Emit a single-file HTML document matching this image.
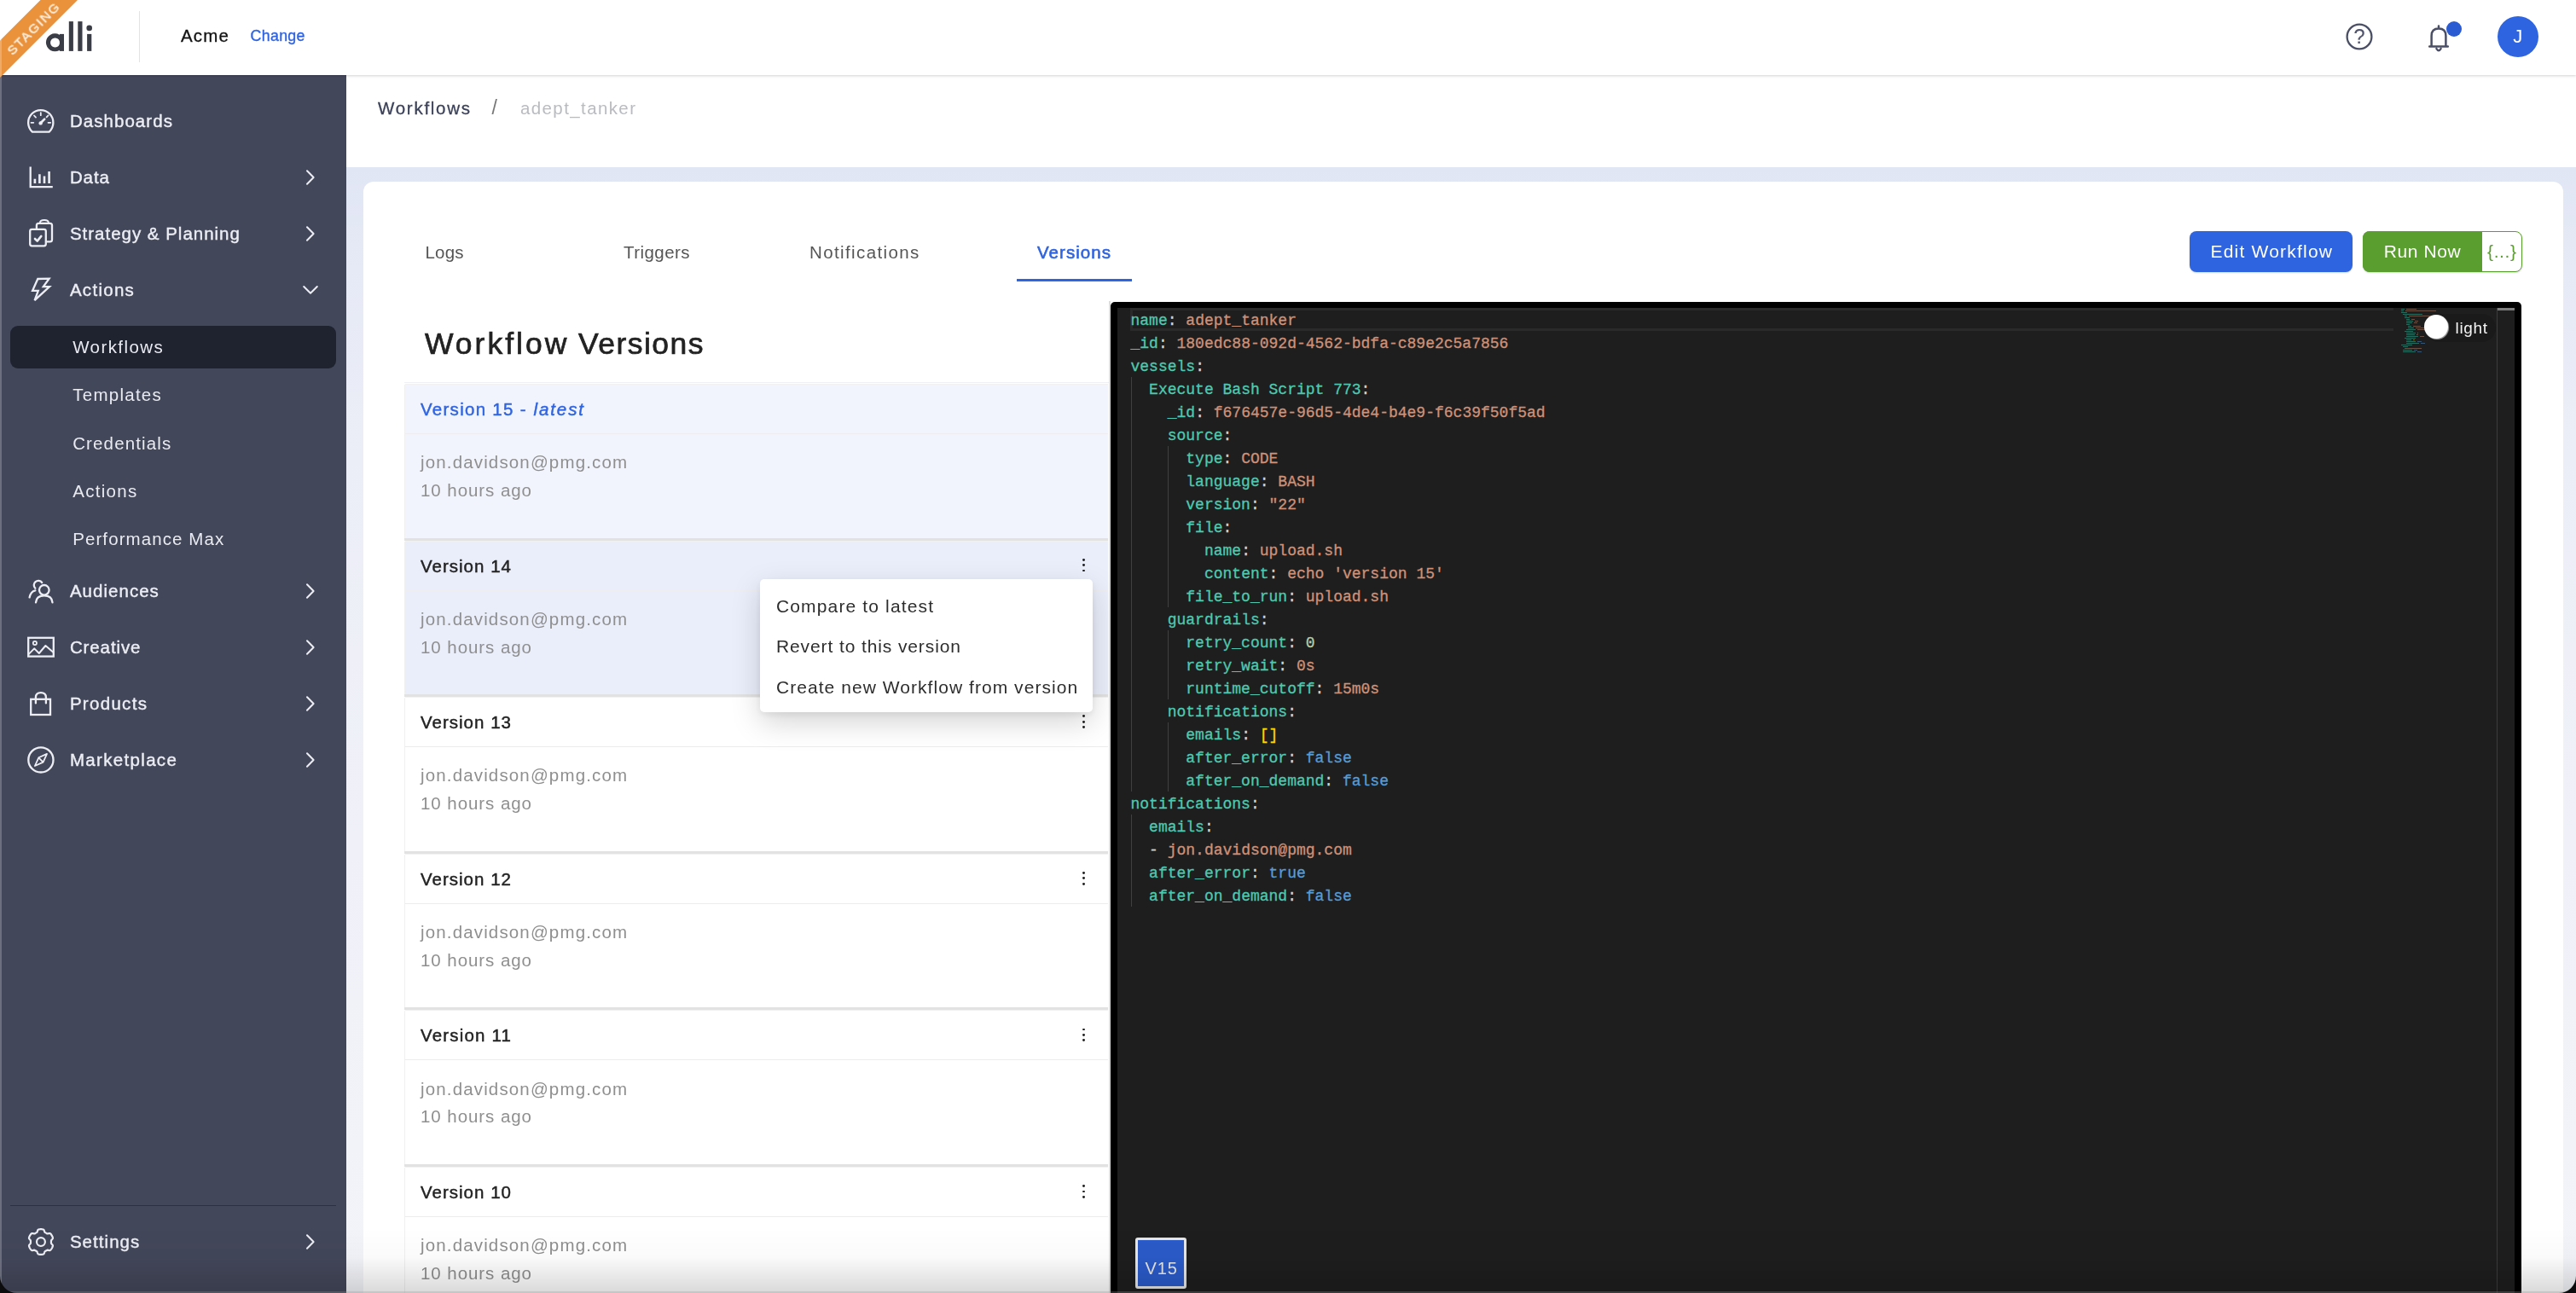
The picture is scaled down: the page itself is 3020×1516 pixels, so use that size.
<!DOCTYPE html>
<html lang="en"><head><meta charset="utf-8"><title>alli - Workflow Versions</title>
<style>
*{box-sizing:border-box;margin:0;padding:0}
html,body{width:3020px;height:1516px;overflow:hidden;background:#fff;font-family:"Liberation Sans",sans-serif}
body{position:relative}
.abs{position:absolute}
.t{position:absolute;white-space:pre;line-height:1;font-family:"Liberation Sans",sans-serif}
body>*{will-change:opacity}
.m{font-family:"Liberation Mono",monospace}
svg{position:absolute;overflow:visible}
.ic{fill:none;stroke:#eceef4;stroke-width:2.3;stroke-linecap:round;stroke-linejoin:round}
#bg{left:406px;top:196px;width:2614px;height:1320px;background:linear-gradient(180deg,#e1e6f5 0px,#e6eaf6 120px,#eceef7 340px,#f0f1f8 800px,#f3f4f8 1320px)}
#crumbs{left:406px;top:88px;width:2614px;height:108px;background:#fff}
#card{left:426px;top:213px;width:2579px;height:1320px;background:#fff;border-radius:12px}
#sidebar{left:0;top:88px;width:406px;height:1428px;background:#43475a}
#header{left:0;top:0;width:3020px;height:88px;background:#fff;box-shadow:0 1px 3px rgba(0,0,0,.18)}
.vb{position:absolute;left:474px;width:824.8px;height:183.7px;background:#fff;border-left:1px solid #f0f0f0;border-top:1px solid #f1f1f1;border-radius:2px 0 0 0}
.vb .hd{position:absolute;left:0;top:0;right:0;height:58px;border-bottom:1px solid #ebebeb}
.vb .bt{position:absolute;left:-1px;right:0;bottom:0;height:3px;background:#e2e2e2}
.dots{position:absolute;width:2.9px;height:2.9px;border-radius:50%;background:#222}
#editor{left:1302px;top:354px;width:1654px;height:1200px;background:#000;border-radius:5px 5px 0 0}
#ed-in{left:8px;top:7px;width:1638px;height:1200px;background:#1e1e1e}
.cl{position:absolute;left:15.5px;height:27px;line-height:27px;margin-top:1.5px;-webkit-text-stroke:0.32px;font-family:"Liberation Mono",monospace;font-size:18px;white-space:pre;color:#d4d4d4}
.k{color:#4ec9b0}.s{color:#ce9178}.n{color:#b5cea8}.b{color:#569cd6}.y{color:#ffd700}
.g{position:absolute;width:1px;background:#404040}
</style></head><body>
<div class="abs" id="bg"></div><div class="abs" id="crumbs"></div><div class="abs" id="card"></div>
<span class="t" style="left:443.0px;top:116.6px;font-size:20.5px;color:#3b4159;font-weight:400;font-style:normal;letter-spacing:1.73px;-webkit-text-stroke:0.3px #3b4159;">Workflows</span>
<span class="t" style="left:576.5px;top:115.0px;font-size:23px;color:#777;font-weight:400;font-style:normal;letter-spacing:0.00px;">/</span>
<span class="t" style="left:610.0px;top:116.6px;font-size:20.5px;color:#b9bbc0;font-weight:400;font-style:normal;letter-spacing:1.39px;">adept_tanker</span>
<span class="t" style="left:498.5px;top:285.6px;font-size:20.5px;color:#555;font-weight:400;font-style:normal;letter-spacing:0.18px;">Logs</span>
<span class="t" style="left:731.0px;top:285.6px;font-size:20.5px;color:#555;font-weight:400;font-style:normal;letter-spacing:0.44px;">Triggers</span>
<span class="t" style="left:949.0px;top:285.6px;font-size:20.5px;color:#555;font-weight:400;font-style:normal;letter-spacing:1.39px;">Notifications</span>
<span class="t" style="left:1216.0px;top:285.6px;font-size:20.5px;color:#2f64e0;font-weight:400;font-style:normal;letter-spacing:1.05px;-webkit-text-stroke:0.6px #2f64e0;">Versions</span>
<div class="abs" style="left:1192px;top:327px;width:135px;height:3px;background:#2f64e0"></div>
<div class="abs" style="left:2567px;top:271px;width:191px;height:48px;border-radius:8px;background:#2f64e0;box-shadow:0 1px 2px rgba(0,0,0,.15)"></div>
<span class="t" style="left:2591.5px;top:284.2px;font-size:21px;color:#fff;font-weight:400;font-style:normal;letter-spacing:1.21px;">Edit Workflow</span>
<div class="abs" style="left:2770px;top:271px;width:187px;height:48px;border-radius:8px;background:#fff;border:1.5px solid #5a9e2f;box-shadow:0 1px 2px rgba(0,0,0,.15)"></div>
<div class="abs" style="left:2770px;top:271px;width:140px;height:48px;border-radius:8px 0 0 8px;background:#5a9e2f"></div>
<span class="t" style="left:2794.7px;top:284.2px;font-size:21px;color:#fff;font-weight:400;font-style:normal;letter-spacing:0.60px;">Run Now</span>
<span class="t" style="left:2916.0px;top:284.2px;font-size:21px;color:#5a9e2f;font-weight:400;font-style:normal;letter-spacing:0.62px;">{...}</span>
<span class="t" style="left:498.0px;top:385.6px;font-size:35.5px;color:#222;font-weight:400;font-style:normal;letter-spacing:3.00px;-webkit-text-stroke:0.7px #222;">Workflow</span>
<span class="t" style="left:678.0px;top:385.6px;font-size:35.5px;color:#222;font-weight:400;font-style:normal;letter-spacing:1.49px;-webkit-text-stroke:0.7px #222;">Versions</span>
<div class="abs" style="left:474px;top:448px;width:826px;height:1px;background:#eef0f5"></div>
<div class="vb" style="top:450px;background:#f1f4fd"><div class="hd" style="border-bottom-color:#eeeef0"></div><div class="bt"></div></div>
<span class="t" style="left:493.0px;top:470.0px;font-size:20.5px;color:#2f64e0;font-weight:400;font-style:normal;letter-spacing:1.28px;-webkit-text-stroke:0.45px #2f64e0;">Version 15 - </span>
<span class="t" style="left:625.5px;top:470.0px;font-size:20.5px;color:#2f64e0;font-weight:400;font-style:italic;letter-spacing:1.90px;-webkit-text-stroke:0.45px #2f64e0;">latest</span>
<span class="t" style="left:493.0px;top:532.1px;font-size:20.5px;color:#8f8f8f;font-weight:400;font-style:normal;letter-spacing:1.15px;">jon.davidson@pmg.com</span>
<span class="t" style="left:493.0px;top:565.0px;font-size:20.5px;color:#8f8f8f;font-weight:400;font-style:normal;letter-spacing:0.94px;">10 hours ago</span>
<div class="vb" style="top:633.6px;background:#eaeefb"><div class="hd" style="border-bottom-color:#eeeef0"></div><div class="bt"></div></div>
<span class="t" style="left:493.0px;top:653.6px;font-size:20.5px;color:#222;font-weight:400;font-style:normal;letter-spacing:1.01px;-webkit-text-stroke:0.45px #222;">Version 14</span>
<div class="dots" style="left:1269.05px;top:654.7px"></div>
<div class="dots" style="left:1269.05px;top:661.1px"></div>
<div class="dots" style="left:1269.05px;top:667.5px"></div>
<span class="t" style="left:493.0px;top:715.7px;font-size:20.5px;color:#8f8f8f;font-weight:400;font-style:normal;letter-spacing:1.15px;">jon.davidson@pmg.com</span>
<span class="t" style="left:493.0px;top:748.6px;font-size:20.5px;color:#8f8f8f;font-weight:400;font-style:normal;letter-spacing:0.94px;">10 hours ago</span>
<div class="vb" style="top:817.2px;background:#fff"><div class="hd" style="border-bottom-color:#ececec"></div><div class="bt"></div></div>
<span class="t" style="left:493.0px;top:837.2px;font-size:20.5px;color:#222;font-weight:400;font-style:normal;letter-spacing:1.01px;-webkit-text-stroke:0.45px #222;">Version 13</span>
<div class="dots" style="left:1269.05px;top:838.3px"></div>
<div class="dots" style="left:1269.05px;top:844.7px"></div>
<div class="dots" style="left:1269.05px;top:851.1px"></div>
<span class="t" style="left:493.0px;top:899.3px;font-size:20.5px;color:#8f8f8f;font-weight:400;font-style:normal;letter-spacing:1.15px;">jon.davidson@pmg.com</span>
<span class="t" style="left:493.0px;top:932.2px;font-size:20.5px;color:#8f8f8f;font-weight:400;font-style:normal;letter-spacing:0.94px;">10 hours ago</span>
<div class="vb" style="top:1000.8px;background:#fff"><div class="hd" style="border-bottom-color:#ececec"></div><div class="bt"></div></div>
<span class="t" style="left:493.0px;top:1020.8px;font-size:20.5px;color:#222;font-weight:400;font-style:normal;letter-spacing:1.01px;-webkit-text-stroke:0.45px #222;">Version 12</span>
<div class="dots" style="left:1269.05px;top:1021.9px"></div>
<div class="dots" style="left:1269.05px;top:1028.3px"></div>
<div class="dots" style="left:1269.05px;top:1034.7px"></div>
<span class="t" style="left:493.0px;top:1082.9px;font-size:20.5px;color:#8f8f8f;font-weight:400;font-style:normal;letter-spacing:1.15px;">jon.davidson@pmg.com</span>
<span class="t" style="left:493.0px;top:1115.8px;font-size:20.5px;color:#8f8f8f;font-weight:400;font-style:normal;letter-spacing:0.94px;">10 hours ago</span>
<div class="vb" style="top:1184.4px;background:#fff"><div class="hd" style="border-bottom-color:#ececec"></div><div class="bt"></div></div>
<span class="t" style="left:493.0px;top:1204.4px;font-size:20.5px;color:#222;font-weight:400;font-style:normal;letter-spacing:1.18px;-webkit-text-stroke:0.45px #222;">Version 11</span>
<div class="dots" style="left:1269.05px;top:1205.5px"></div>
<div class="dots" style="left:1269.05px;top:1211.9px"></div>
<div class="dots" style="left:1269.05px;top:1218.3px"></div>
<span class="t" style="left:493.0px;top:1266.5px;font-size:20.5px;color:#8f8f8f;font-weight:400;font-style:normal;letter-spacing:1.15px;">jon.davidson@pmg.com</span>
<span class="t" style="left:493.0px;top:1299.4px;font-size:20.5px;color:#8f8f8f;font-weight:400;font-style:normal;letter-spacing:0.94px;">10 hours ago</span>
<div class="vb" style="top:1368px;background:#fff"><div class="hd" style="border-bottom-color:#ececec"></div><div class="bt"></div></div>
<span class="t" style="left:493.0px;top:1388.0px;font-size:20.5px;color:#222;font-weight:400;font-style:normal;letter-spacing:1.01px;-webkit-text-stroke:0.45px #222;">Version 10</span>
<div class="dots" style="left:1269.05px;top:1389.1px"></div>
<div class="dots" style="left:1269.05px;top:1395.5px"></div>
<div class="dots" style="left:1269.05px;top:1401.9px"></div>
<span class="t" style="left:493.0px;top:1450.1px;font-size:20.5px;color:#8f8f8f;font-weight:400;font-style:normal;letter-spacing:1.15px;">jon.davidson@pmg.com</span>
<span class="t" style="left:493.0px;top:1483.0px;font-size:20.5px;color:#8f8f8f;font-weight:400;font-style:normal;letter-spacing:0.94px;">10 hours ago</span>
<div class="abs" style="left:1300px;top:353px;width:2px;height:1163px;background:#dcdcdc"></div>
<div class="abs" style="left:891px;top:679px;width:390px;height:156px;background:#fff;border-radius:5px;box-shadow:0 12px 34px rgba(0,0,0,.17),0 3px 9px rgba(0,0,0,.07)"></div>
<span class="t" style="left:910.0px;top:699.7px;font-size:21px;color:#2d2d2d;font-weight:400;font-style:normal;letter-spacing:1.14px;">Compare to latest</span>
<span class="t" style="left:910.0px;top:747.4px;font-size:21px;color:#2d2d2d;font-weight:400;font-style:normal;letter-spacing:0.89px;">Revert to this version</span>
<span class="t" style="left:910.0px;top:795.2px;font-size:21px;color:#2d2d2d;font-weight:400;font-style:normal;letter-spacing:1.05px;">Create new Workflow from version</span>
<div class="abs" id="editor"><div class="abs" id="ed-in"><div class="abs" style="left:15px;top:0;width:1481px;height:27.5px;border:3px solid #2a2a2a;border-right:none;top:-0.5px"></div><div class="g" style="left:15.5px;top:81px;height:486px"></div><div class="g" style="left:58.7px;top:162px;height:189px"></div><div class="g" style="left:58.7px;top:378px;height:81px"></div><div class="g" style="left:58.7px;top:486px;height:81px"></div><div class="g" style="left:15.5px;top:594px;height:108px"></div><div class="cl" style="top:0px"><span class="k">name</span>: <span class="s">adept_tanker</span></div><div class="cl" style="top:27px"><span class="k">_id</span>: <span class="s">180edc88-092d-4562-bdfa-c89e2c5a7856</span></div><div class="cl" style="top:54px"><span class="k">vessels</span>:</div><div class="cl" style="top:81px">  <span class="k">Execute Bash Script 773</span>:</div><div class="cl" style="top:108px">    <span class="k">_id</span>: <span class="s">f676457e-96d5-4de4-b4e9-f6c39f50f5ad</span></div><div class="cl" style="top:135px">    <span class="k">source</span>:</div><div class="cl" style="top:162px">      <span class="k">type</span>: <span class="s">CODE</span></div><div class="cl" style="top:189px">      <span class="k">language</span>: <span class="s">BASH</span></div><div class="cl" style="top:216px">      <span class="k">version</span>: <span class="s">&quot;22&quot;</span></div><div class="cl" style="top:243px">      <span class="k">file</span>:</div><div class="cl" style="top:270px">        <span class="k">name</span>: <span class="s">upload.sh</span></div><div class="cl" style="top:297px">        <span class="k">content</span>: <span class="s">echo &#x27;version 15&#x27;</span></div><div class="cl" style="top:324px">      <span class="k">file_to_run</span>: <span class="s">upload.sh</span></div><div class="cl" style="top:351px">    <span class="k">guardrails</span>:</div><div class="cl" style="top:378px">      <span class="k">retry_count</span>: <span class="n">0</span></div><div class="cl" style="top:405px">      <span class="k">retry_wait</span>: <span class="s">0s</span></div><div class="cl" style="top:432px">      <span class="k">runtime_cutoff</span>: <span class="s">15m0s</span></div><div class="cl" style="top:459px">    <span class="k">notifications</span>:</div><div class="cl" style="top:486px">      <span class="k">emails</span>: <span class="y">[]</span></div><div class="cl" style="top:513px">      <span class="k">after_error</span>: <span class="b">false</span></div><div class="cl" style="top:540px">      <span class="k">after_on_demand</span>: <span class="b">false</span></div><div class="cl" style="top:567px"><span class="k">notifications</span>:</div><div class="cl" style="top:594px">  <span class="k">emails</span>:</div><div class="cl" style="top:621px">  - <span class="s">jon.davidson@pmg.com</span></div><div class="cl" style="top:648px">  <span class="k">after_error</span>: <span class="b">true</span></div><div class="cl" style="top:675px">  <span class="k">after_on_demand</span>: <span class="b">false</span></div><div class="abs" style="left:1505.0px;top:1.0px;width:4.0px;height:1.4px;opacity:.62;background:#2f9c88"></div><div class="abs" style="left:1511.0px;top:1.0px;width:12.0px;height:1.4px;opacity:.62;background:#9c6f5a"></div><div class="abs" style="left:1505.0px;top:3.0px;width:3.0px;height:1.4px;opacity:.62;background:#2f9c88"></div><div class="abs" style="left:1510.0px;top:3.0px;width:36.0px;height:1.4px;opacity:.62;background:#9c6f5a"></div><div class="abs" style="left:1505.0px;top:5.0px;width:7.0px;height:1.4px;opacity:.62;background:#2f9c88"></div><div class="abs" style="left:1507.0px;top:7.0px;width:23.0px;height:1.4px;opacity:.62;background:#2f9c88"></div><div class="abs" style="left:1509.0px;top:9.0px;width:3.0px;height:1.4px;opacity:.62;background:#2f9c88"></div><div class="abs" style="left:1514.0px;top:9.0px;width:36.0px;height:1.4px;opacity:.62;background:#9c6f5a"></div><div class="abs" style="left:1509.0px;top:11.0px;width:6.0px;height:1.4px;opacity:.62;background:#2f9c88"></div><div class="abs" style="left:1511.0px;top:13.0px;width:4.0px;height:1.4px;opacity:.62;background:#2f9c88"></div><div class="abs" style="left:1517.0px;top:13.0px;width:4.0px;height:1.4px;opacity:.62;background:#9c6f5a"></div><div class="abs" style="left:1511.0px;top:15.0px;width:8.0px;height:1.4px;opacity:.62;background:#2f9c88"></div><div class="abs" style="left:1521.0px;top:15.0px;width:4.0px;height:1.4px;opacity:.62;background:#9c6f5a"></div><div class="abs" style="left:1511.0px;top:17.0px;width:7.0px;height:1.4px;opacity:.62;background:#2f9c88"></div><div class="abs" style="left:1520.0px;top:17.0px;width:4.0px;height:1.4px;opacity:.62;background:#9c6f5a"></div><div class="abs" style="left:1511.0px;top:19.0px;width:4.0px;height:1.4px;opacity:.62;background:#2f9c88"></div><div class="abs" style="left:1513.0px;top:21.0px;width:4.0px;height:1.4px;opacity:.62;background:#2f9c88"></div><div class="abs" style="left:1519.0px;top:21.0px;width:9.0px;height:1.4px;opacity:.62;background:#9c6f5a"></div><div class="abs" style="left:1513.0px;top:23.0px;width:7.0px;height:1.4px;opacity:.62;background:#2f9c88"></div><div class="abs" style="left:1522.0px;top:23.0px;width:17.0px;height:1.4px;opacity:.62;background:#9c6f5a"></div><div class="abs" style="left:1511.0px;top:25.0px;width:11.0px;height:1.4px;opacity:.62;background:#2f9c88"></div><div class="abs" style="left:1524.0px;top:25.0px;width:9.0px;height:1.4px;opacity:.62;background:#9c6f5a"></div><div class="abs" style="left:1509.0px;top:27.0px;width:10.0px;height:1.4px;opacity:.62;background:#2f9c88"></div><div class="abs" style="left:1511.0px;top:29.0px;width:11.0px;height:1.4px;opacity:.62;background:#2f9c88"></div><div class="abs" style="left:1524.0px;top:29.0px;width:1.0px;height:1.4px;opacity:.62;background:#8aa080"></div><div class="abs" style="left:1511.0px;top:31.0px;width:10.0px;height:1.4px;opacity:.62;background:#2f9c88"></div><div class="abs" style="left:1523.0px;top:31.0px;width:2.0px;height:1.4px;opacity:.62;background:#9c6f5a"></div><div class="abs" style="left:1511.0px;top:33.0px;width:14.0px;height:1.4px;opacity:.62;background:#2f9c88"></div><div class="abs" style="left:1527.0px;top:33.0px;width:5.0px;height:1.4px;opacity:.62;background:#9c6f5a"></div><div class="abs" style="left:1509.0px;top:35.0px;width:13.0px;height:1.4px;opacity:.62;background:#2f9c88"></div><div class="abs" style="left:1511.0px;top:37.0px;width:6.0px;height:1.4px;opacity:.62;background:#2f9c88"></div><div class="abs" style="left:1519.0px;top:37.0px;width:2.0px;height:1.4px;opacity:.62;background:#b39a00"></div><div class="abs" style="left:1511.0px;top:39.0px;width:11.0px;height:1.4px;opacity:.62;background:#2f9c88"></div><div class="abs" style="left:1524.0px;top:39.0px;width:5.0px;height:1.4px;opacity:.62;background:#4377a6"></div><div class="abs" style="left:1511.0px;top:41.0px;width:15.0px;height:1.4px;opacity:.62;background:#2f9c88"></div><div class="abs" style="left:1528.0px;top:41.0px;width:5.0px;height:1.4px;opacity:.62;background:#4377a6"></div><div class="abs" style="left:1505.0px;top:43.0px;width:13.0px;height:1.4px;opacity:.62;background:#2f9c88"></div><div class="abs" style="left:1507.0px;top:45.0px;width:6.0px;height:1.4px;opacity:.62;background:#2f9c88"></div><div class="abs" style="left:1509.0px;top:47.0px;width:20.0px;height:1.4px;opacity:.62;background:#9c6f5a"></div><div class="abs" style="left:1507.0px;top:49.0px;width:11.0px;height:1.4px;opacity:.62;background:#2f9c88"></div><div class="abs" style="left:1520.0px;top:49.0px;width:4.0px;height:1.4px;opacity:.62;background:#4377a6"></div><div class="abs" style="left:1507.0px;top:51.0px;width:15.0px;height:1.4px;opacity:.62;background:#2f9c88"></div><div class="abs" style="left:1524.0px;top:51.0px;width:5.0px;height:1.4px;opacity:.62;background:#4377a6"></div><div class="abs" style="left:1617px;top:0;width:1px;height:1200px;background:#3c3c3c"></div><div class="abs" style="left:1618px;top:0;width:20px;height:3px;background:#7d7d7d"></div><div class="abs" style="left:1533px;top:7px;width:83px;height:33px;border-radius:17px;background:#1a1a1a"></div><div class="abs" style="left:1532px;top:8px;width:28px;height:28px;border-radius:50%;background:#fff;box-shadow:1px 1px 1px rgba(190,190,190,.9)"></div><div class="abs" style="left:21px;top:1090px;width:60px;height:60px;background:#2b5bc9;border:3px solid #e6e6e6;border-radius:3px"></div></div></div>
<span class="t" style="left:2878.5px;top:374.5px;font-size:19px;color:#f2f2f2;font-weight:400;font-style:normal;letter-spacing:0.66px;">light</span>
<span class="t" style="left:1342.5px;top:1477.1px;font-size:20px;color:#e8e8e8;font-weight:400;font-style:normal;letter-spacing:0.95px;">V15</span>
<div class="abs" id="sidebar"></div><span class="t" style="left:81.9px;top:131.6px;font-size:20.5px;color:#eceef4;font-weight:400;font-style:normal;letter-spacing:1.05px;-webkit-text-stroke:0.4px #eceef4;">Dashboards</span><span class="t" style="left:81.9px;top:197.6px;font-size:20.5px;color:#eceef4;font-weight:400;font-style:normal;letter-spacing:0.90px;-webkit-text-stroke:0.4px #eceef4;">Data</span><svg style="left:354px;top:196px" width="24" height="24"><path class="ic" style="stroke-width:2" d="M6 4.2 L13.6 12 L6 19.8"/></svg><span class="t" style="left:81.9px;top:263.6px;font-size:20.5px;color:#eceef4;font-weight:400;font-style:normal;letter-spacing:0.99px;-webkit-text-stroke:0.4px #eceef4;">Strategy &amp; Planning</span><svg style="left:354px;top:262px" width="24" height="24"><path class="ic" style="stroke-width:2" d="M6 4.2 L13.6 12 L6 19.8"/></svg><span class="t" style="left:81.9px;top:329.6px;font-size:20.5px;color:#eceef4;font-weight:400;font-style:normal;letter-spacing:1.29px;-webkit-text-stroke:0.4px #eceef4;">Actions</span><svg style="left:352px;top:328px" width="24" height="24"><path class="ic" style="stroke-width:2" d="M4.2 8 L12 15.8 L19.8 8"/></svg><span class="t" style="left:81.9px;top:682.6px;font-size:20.5px;color:#eceef4;font-weight:400;font-style:normal;letter-spacing:1.03px;-webkit-text-stroke:0.4px #eceef4;">Audiences</span><svg style="left:354px;top:681px" width="24" height="24"><path class="ic" style="stroke-width:2" d="M6 4.2 L13.6 12 L6 19.8"/></svg><span class="t" style="left:81.9px;top:748.6px;font-size:20.5px;color:#eceef4;font-weight:400;font-style:normal;letter-spacing:0.89px;-webkit-text-stroke:0.4px #eceef4;">Creative</span><svg style="left:354px;top:747px" width="24" height="24"><path class="ic" style="stroke-width:2" d="M6 4.2 L13.6 12 L6 19.8"/></svg><span class="t" style="left:81.9px;top:814.6px;font-size:20.5px;color:#eceef4;font-weight:400;font-style:normal;letter-spacing:1.30px;-webkit-text-stroke:0.4px #eceef4;">Products</span><svg style="left:354px;top:813px" width="24" height="24"><path class="ic" style="stroke-width:2" d="M6 4.2 L13.6 12 L6 19.8"/></svg><span class="t" style="left:81.9px;top:880.6px;font-size:20.5px;color:#eceef4;font-weight:400;font-style:normal;letter-spacing:1.33px;-webkit-text-stroke:0.4px #eceef4;">Marketplace</span><svg style="left:354px;top:879px" width="24" height="24"><path class="ic" style="stroke-width:2" d="M6 4.2 L13.6 12 L6 19.8"/></svg><span class="t" style="left:81.9px;top:1445.6px;font-size:20.5px;color:#eceef4;font-weight:400;font-style:normal;letter-spacing:1.05px;-webkit-text-stroke:0.4px #eceef4;">Settings</span><svg style="left:354px;top:1444px" width="24" height="24"><path class="ic" style="stroke-width:2" d="M6 4.2 L13.6 12 L6 19.8"/></svg><div class="abs" style="left:12px;top:382px;width:382px;height:50px;border-radius:9px;background:#1f2330"></div><span class="t" style="left:85.2px;top:397.0px;font-size:20.5px;color:#e9ebf1;font-weight:400;font-style:normal;letter-spacing:1.43px;">Workflows</span><span class="t" style="left:85.2px;top:452.6px;font-size:20.5px;color:#e9ebf1;font-weight:400;font-style:normal;letter-spacing:1.27px;">Templates</span><span class="t" style="left:85.2px;top:509.6px;font-size:20.5px;color:#e9ebf1;font-weight:400;font-style:normal;letter-spacing:1.13px;">Credentials</span><span class="t" style="left:85.2px;top:565.6px;font-size:20.5px;color:#e9ebf1;font-weight:400;font-style:normal;letter-spacing:1.29px;">Actions</span><span class="t" style="left:85.2px;top:622.1px;font-size:20.5px;color:#e9ebf1;font-weight:400;font-style:normal;letter-spacing:1.09px;">Performance Max</span><div class="abs" style="left:12px;top:1413px;width:382px;height:1px;background:#2e3142"></div><svg style="left:0;top:0" width="406" height="1516" viewBox="0 0 406 1516"><path class="ic" d="M37.9 154.6 A14.65 14.65 0 1 1 57.6 154.6 Z"/><path class="ic" style="stroke-width:1.8" d="M47.8 132.2 V135.2 M40 135.5 L42 137.6 M56.5 135.4 L54.6 137.4 M36.5 143.8 H39.3 M56.5 143.8 H59.2"/><path class="ic" style="stroke-width:2.7" d="M47.9 144 L52.2 139.6"/><circle cx="47.6" cy="144.4" r="2.2" fill="#eceef4"/><path class="ic" style="stroke-linecap:butt;stroke-linejoin:miter" d="M35.7 195.4 V219.1 H61.8"/><path class="ic" style="stroke-linecap:butt;stroke-width:2.6" d="M40.9 209.8 V214.9 M46.4 204.2 V214.9 M52 206.5 V214.9 M57.6 200.9 V214.9"/><path class="ic" d="M42.9 267.4 V264.3 Q42.9 261.9 45.3 261.9 H58.6 Q61 261.9 61 264.3 V281 Q61 283.4 58.6 283.4 H55.2"/><path class="ic" style="stroke-width:2" d="M46.9 261.8 V261.2 Q47.1 258 51.9 258 Q56.7 258 56.9 261.2 V261.8"/><rect class="ic" x="35.2" y="268.8" width="18.6" height="19.5" rx="2.2"/><path class="ic" style="stroke-width:2.6" d="M41 280 L43.7 282.6 L48.3 276.9"/><path class="ic" style="stroke-linejoin:miter" d="M44.3 327 L57.6 326.6 L50.8 336.1 H58 L40.6 352.2 L44.8 340.9 H38.1 Z"/><circle class="ic" cx="51.8" cy="691.8" r="5.8"/><path class="ic" d="M42 706.4 Q42.6 698.4 51.8 698.4 Q61 698.4 61.5 706.4"/><path class="ic" d="M49.2 683 A5.2 5.2 0 1 0 41.3 689.7"/><path class="ic" d="M41.3 692.3 Q36 693.4 34.6 700.4"/><rect class="ic" style="stroke-linejoin:miter" x="33.2" y="747.8" width="29.6" height="21.8"/><circle class="ic" style="stroke-width:1.8" cx="40.9" cy="754" r="2.1"/><path class="ic" style="stroke-width:2" d="M34 766.6 L40.2 760.4 L45.8 766 L53.4 757 L62.4 764.8"/><rect class="ic" style="stroke-linejoin:miter" x="36.2" y="819.8" width="22.8" height="18.2"/><path class="ic" d="M41.9 824.4 V817.6 Q42 812.2 47.9 812.2 Q53.8 812.2 53.9 817.6 V824.4"/><circle class="ic" cx="47.9" cy="890.9" r="14.6"/><path class="ic" style="stroke-width:1.8" d="M55 883.9 L50.6 893.6 L40.9 898 L45.3 888.3 Z M45.3 888.3 L50.6 893.6"/><path class="ic" style="stroke-width:2.2" d="M47.95 1441.20 L48.60 1441.21 L49.24 1441.26 L49.89 1441.34 L50.52 1441.48 L51.12 1441.74 L51.63 1442.30 L51.97 1443.30 L52.25 1444.24 L52.62 1444.79 L53.05 1445.12 L53.50 1445.39 L53.95 1445.65 L54.41 1445.92 L54.87 1446.17 L55.37 1446.38 L56.03 1446.42 L56.98 1446.20 L58.01 1445.99 L58.76 1446.14 L59.28 1446.54 L59.72 1447.02 L60.11 1447.53 L60.47 1448.07 L60.81 1448.62 L61.12 1449.19 L61.40 1449.78 L61.66 1450.37 L61.85 1450.99 L61.93 1451.64 L61.70 1452.37 L61.00 1453.16 L60.33 1453.87 L60.04 1454.46 L59.96 1455.00 L59.95 1455.53 L59.95 1456.05 L59.95 1456.57 L59.96 1457.10 L60.04 1457.64 L60.33 1458.23 L61.00 1458.94 L61.70 1459.73 L61.93 1460.46 L61.85 1461.11 L61.66 1461.73 L61.40 1462.32 L61.12 1462.91 L60.81 1463.47 L60.47 1464.03 L60.11 1464.57 L59.72 1465.08 L59.28 1465.56 L58.76 1465.96 L58.01 1466.11 L56.98 1465.90 L56.03 1465.68 L55.37 1465.72 L54.87 1465.93 L54.41 1466.18 L53.95 1466.45 L53.50 1466.71 L53.05 1466.98 L52.62 1467.31 L52.25 1467.86 L51.97 1468.80 L51.63 1469.80 L51.12 1470.36 L50.52 1470.62 L49.89 1470.76 L49.24 1470.84 L48.60 1470.89 L47.95 1470.90 L47.30 1470.89 L46.66 1470.84 L46.01 1470.76 L45.38 1470.62 L44.78 1470.36 L44.27 1469.80 L43.93 1468.80 L43.65 1467.86 L43.28 1467.31 L42.85 1466.98 L42.40 1466.71 L41.95 1466.45 L41.49 1466.18 L41.03 1465.93 L40.53 1465.72 L39.87 1465.68 L38.92 1465.90 L37.89 1466.11 L37.14 1465.96 L36.62 1465.56 L36.18 1465.08 L35.79 1464.57 L35.43 1464.03 L35.09 1463.47 L34.78 1462.91 L34.50 1462.32 L34.24 1461.73 L34.05 1461.11 L33.97 1460.46 L34.20 1459.73 L34.90 1458.94 L35.57 1458.23 L35.86 1457.64 L35.94 1457.10 L35.95 1456.57 L35.95 1456.05 L35.95 1455.53 L35.94 1455.00 L35.86 1454.46 L35.57 1453.87 L34.90 1453.16 L34.20 1452.37 L33.97 1451.64 L34.05 1450.99 L34.24 1450.37 L34.50 1449.78 L34.78 1449.19 L35.09 1448.62 L35.43 1448.07 L35.79 1447.53 L36.18 1447.02 L36.62 1446.54 L37.14 1446.14 L37.89 1445.99 L38.92 1446.20 L39.87 1446.42 L40.53 1446.38 L41.03 1446.17 L41.49 1445.92 L41.95 1445.65 L42.40 1445.39 L42.85 1445.12 L43.28 1444.79 L43.65 1444.24 L43.93 1443.30 L44.27 1442.30 L44.78 1441.74 L45.38 1441.48 L46.01 1441.34 L46.66 1441.26 L47.30 1441.21 Z"/><circle class="ic" style="stroke-width:2.2" cx="47.95" cy="1456.05" r="4.95"/></svg>
<div class="abs" id="header"></div><div class="abs" style="left:163px;top:13px;width:1px;height:60px;background:#e3e3e6"></div><svg style="left:0;top:0" width="120" height="88"><g fill="#3b3d46"><path fill-rule="evenodd" d="M64.4 39.3 a10.5 10.5 0 1 0 0.01 0 Z M64.6 44.4 a5.5 5.5 0 1 1 -0.01 0 Z"/><rect x="69.9" y="39.9" width="5.1" height="20"/><rect x="80.8" y="25.1" width="5.1" height="34.8"/><rect x="91.3" y="25.1" width="5.2" height="34.8"/><rect x="102.1" y="39.9" width="5.2" height="20"/><circle cx="104.7" cy="32.9" r="3.3"/></g></svg><span class="t" style="left:212.0px;top:31.6px;font-size:20.5px;color:#111;font-weight:400;font-style:normal;letter-spacing:1.20px;-webkit-text-stroke:0.3px #111;">Acme</span><span class="t" style="left:293.5px;top:33.9px;font-size:17.8px;color:#2f64e0;font-weight:400;font-style:normal;letter-spacing:0.34px;-webkit-text-stroke:0.35px #2f64e0;">Change</span><svg style="left:2740px;top:17px" width="52" height="52"><circle cx="26" cy="26" r="14.4" fill="none" stroke="#4b4f66" stroke-width="2.3"/></svg><span class="t" style="left:2759.6px;top:31.7px;font-size:23.5px;color:#50546c;font-weight:400;font-style:normal;letter-spacing:0.00px;-webkit-text-stroke:0.2px #50546c;">?</span><svg style="left:2840px;top:24px" width="40" height="40"><path d="M8.2 30.4 H29.8 M10.6 29.8 V18 Q10.6 9.6 19 9.6 Q27.4 9.6 27.4 18 V29.8 M19 9 V6.6 M16.4 33 Q19 37.6 21.6 33" fill="none" stroke="#4b4f66" stroke-width="2.5" stroke-linecap="round" stroke-linejoin="round"/></svg><div class="abs" style="left:2868px;top:25px;width:18px;height:18px;border-radius:50%;background:#2a5bd2"></div><div class="abs" style="left:2928px;top:19px;width:48px;height:48px;border-radius:50%;background:#2f64e0"></div><span class="t" style="left:2946.3px;top:32.0px;font-size:22px;color:#fff;font-weight:400;font-style:normal;letter-spacing:0.00px;">J</span><svg style="left:0;top:0" width="100" height="100"><path d="M0 47.5 L47.5 0 H91 L0 91 Z" fill="#e9923b"/></svg><div class="t" style="left:-11.5px;top:25.8px;width:100px;text-align:center;font-size:15.5px;line-height:16px;letter-spacing:1.75px;text-indent:1.75px;color:#fdeedd;-webkit-text-stroke:0.35px #fdeedd;transform:rotate(-45deg);transform-origin:50% 50%">STAGING</div>
<div class="abs" style="left:0;top:1440px;width:3020px;height:76px;background:linear-gradient(180deg,rgba(0,0,0,0) 0%,rgba(0,0,0,.02) 45%,rgba(0,0,0,.15) 100%)"></div>
<div class="abs" style="left:0;top:1514px;width:3020px;height:2px;background:rgba(150,150,150,.28)"></div>
<div class="abs" style="left:0;top:46px;width:2px;height:1470px;background:rgba(255,255,255,.22)"></div>
<svg style="left:0;top:1496px" width="20" height="20"><path d="M0 0 V20 H20 A20 20 0 0 1 0 0 Z" fill="#0c0c0e"/></svg>
<svg style="left:3000px;top:1496px" width="20" height="20"><path d="M20 0 V20 H0 A20 20 0 0 0 20 0 Z" fill="#0c0c0e"/></svg>
</body></html>
